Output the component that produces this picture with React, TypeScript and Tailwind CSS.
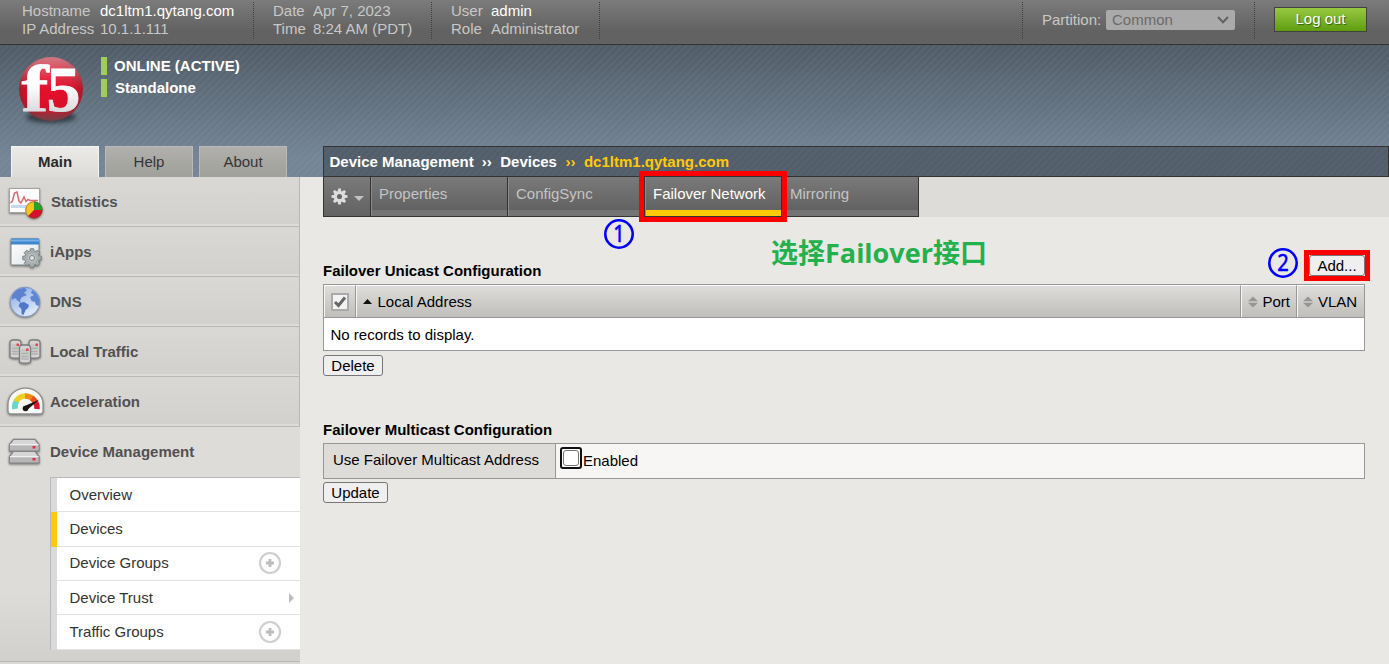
import React from "react";

function Gear({ size, color, hole }: { size: number; color: string; hole: string }) {
  const angles = [0, 45, 90, 135, 180, 225, 270, 315];
  return (
    <svg width={size} height={size} viewBox="-10 -10 20 20">
      <g fill={color}>
        {angles.map((a) => (
          <path key={a} d="M-2.2 -5.5 L-1.5 -9.4 L1.5 -9.4 L2.2 -5.5Z" transform={`rotate(${a})`} />
        ))}
      </g>
      <circle r="6.6" fill={color} />
      <circle r="3" fill={hole} />
    </svg>
  );
}

function F5Logo() {
  return (
    <svg className="-mt-[8px]" width="70" height="88" viewBox="0 -8 70 88">
      <defs>
        <radialGradient id="ball" cx="0.5" cy="0.5" r="0.52">
          <stop offset="0" stopColor="#e80f2c" />
          <stop offset="0.7" stopColor="#d5112a" />
          <stop offset="1" stopColor="#a01c2a" />
        </radialGradient>
        <linearGradient id="shine" x1="0" y1="0" x2="0" y2="1">
          <stop offset="0" stopColor="#fff" stopOpacity="0.42" />
          <stop offset="0.35" stopColor="#fff" stopOpacity="0.1" />
          <stop offset="0.5" stopColor="#fff" stopOpacity="0" />
          <stop offset="0.78" stopColor="#555" stopOpacity="0" />
          <stop offset="1" stopColor="#555" stopOpacity="0.7" />
        </linearGradient>
        <linearGradient id="letter" gradientUnits="userSpaceOnUse" x1="0" y1="12" x2="0" y2="57">
          <stop offset="0.4" stopColor="#fff" />
          <stop offset="1" stopColor="#dadadd" />
        </linearGradient>
        <filter id="soft" x="-20%" y="-50%" width="140%" height="200%">
          <feGaussianBlur stdDeviation="2" />
        </filter>
      </defs>
      <ellipse cx="35" cy="62" rx="25" ry="6" fill="#232a31" opacity="0.75" filter="url(#soft)" />
      <circle cx="35" cy="34" r="32" fill="url(#ball)" />
      <circle cx="35" cy="34" r="32" fill="url(#shine)" />
      <g fontFamily="Liberation Serif, serif" fontWeight="bold" fill="url(#letter)" stroke="url(#letter)" strokeWidth="0.8">
        <text x="5.500" y="56" fontSize="66" textLength="27" lengthAdjust="spacingAndGlyphs">f</text>
        <text x="30.500" y="56" fontSize="64" textLength="34" lengthAdjust="spacingAndGlyphs">5</text>
      </g>
    </svg>
  );
}

const shadow = "drop-shadow-[0_1px_1px_rgba(0,0,0,0.45)]";

function StatisticsIcon() {
  return (
    <svg width="38" height="36" viewBox="0 0 38 36" className={shadow}>
      <rect x="2.5" y="5.5" width="30" height="24" fill="#fbfbfb" stroke="#a3a3a3" />
      <rect x="4" y="22" width="27" height="3" fill="#c5d8ee" />
      <path d="M3.500 20 L5.500 18 L7.500 10 L10 9 L12 18 L14 20 L17 14 L19 18.500 L21 16.500 L23 17.500 L31 17.500" fill="none" stroke="#dd6a70" strokeWidth="1.500" />
      <circle cx="27" cy="27" r="8.500" fill="#d4122c" />
      <path d="M27 27 L27 18.500 A8.500 8.500 0 0 1 35.500 27Z" fill="#27a12a" />
      <path d="M27 27 L21 33 A8.500 8.500 0 0 1 27 18.500Z" fill="#f6c31c" />
      <circle cx="27" cy="27" r="8.200" fill="none" stroke="#6f5a1c" strokeOpacity="0.45" />
    </svg>
  );
}

function IAppsIcon() {
  return (
    <svg width="38" height="36" viewBox="0 0 38 36" className={shadow}>
      <defs>
        <linearGradient id="win" x1="0" y1="0" x2="1" y2="1">
          <stop offset="0" stopColor="#fff" />
          <stop offset="1" stopColor="#dfe4e8" />
        </linearGradient>
      </defs>
      <rect x="4" y="6" width="28" height="26" rx="1" fill="url(#win)" stroke="#7d858a" />
      <rect x="4" y="5.500" width="28" height="6" fill="#3f86cd" />
      <rect x="4" y="6.500" width="28" height="2" fill="#76b0e6" />
      <svg x="15" y="15" width="20" height="20" viewBox="-10 -10 20 20">
        {[0, 45, 90, 135, 180, 225, 270, 315].map((a) => (
          <path key={a} d="M-2.500 -5.500 L-1.700 -9.300 L1.700 -9.300 L2.500 -5.500Z" transform={`rotate(${a})`} fill="#a5adad" stroke="#7b8383" strokeWidth="0.900" />
        ))}
        <circle r="6.800" fill="#a9b1b1" />
        <circle r="4" fill="#bcc3c3" />
        <circle r="2.500" fill="#e2e5e5" stroke="#788080" />
      </svg>
    </svg>
  );
}

function DnsIcon() {
  return (
    <svg width="38" height="36" viewBox="0 0 38 36" className={shadow}>
      <defs>
        <linearGradient id="sea" x1="0" y1="0" x2="0.6" y2="1">
          <stop offset="0" stopColor="#86a8e2" />
          <stop offset="1" stopColor="#dfe9fb" />
        </linearGradient>
      </defs>
      <circle cx="18" cy="19" r="14.800" fill="url(#sea)" stroke="#7f95bf" />
      <path d="M5 13 C8 7 13 5 18 5 L20 7 L17 10 L20 12 L15 14 L13 17 L14 20 L11 18 L8 15 L5 17Z" fill="#5d83cf" />
      <path d="M13 20 L17 19 L22 22 L21 25 L18.500 27 L16.500 32 L14.500 31 L14.500 26 L11.500 23Z" fill="#4e76c9" />
      <path d="M25 7 C29 9 32 13 32.500 18 L32 23 L29 22 L28 19 L24.500 18 L23 14 L27 12 L24 10Z" fill="#5f86d2" />
    </svg>
  );
}

function TrafficIcon() {
  const tower = (x: number, y: number) => (
    <g transform={`translate(${x} ${y})`}>
      <path d="M0.500 4 Q0.500 1 3.500 1 L8 1 Q11.500 1 11.500 4 L11.500 18 Q6 20.500 0.500 18Z" fill="#d4d4d4" stroke="#7c7c7c" strokeWidth="1.300" />
      <path d="M2 5 H10 V16 H2Z" fill="#c6c6c6" />
      <path d="M2.500 9.500 H9 M2.500 12.500 H9 M2.500 15 H9" stroke="#adadad" />
      <rect x="7" y="4.500" width="2.500" height="2.500" fill="#ec3d55" />
      <rect x="7" y="8.500" width="2" height="1.500" fill="#8bd07c" />
    </g>
  );
  return (
    <svg width="38" height="36" viewBox="0 0 38 36" className={shadow}>
      {tower(2.5, 6)}
      {tower(21.5, 6)}
      {tower(12, 11)}
    </svg>
  );
}

function AccelerationIcon() {
  return (
    <svg width="38" height="36" viewBox="0 0 38 36" className={shadow}>
      <path d="M1 28 V21 A17 15.500 0 0 1 36 21 V28 Q36 31 32.500 31 H4.500 Q1 31 1 28Z" fill="#f8f8f6" stroke="#8f8f8f" strokeWidth="1.300" />
      <g fill="none" strokeWidth="5.500">
        <path d="M8 26 A11 11 0 0 1 10 17.500" stroke="#63d6d0" />
        <path d="M9 18.500 A11 11 0 0 1 19 13" stroke="#edcf25" />
        <path d="M18 13 A12 12 0 0 1 26 16" stroke="#f28a16" />
        <path d="M25 15 A11 11 0 0 1 28.500 20" stroke="#e94b20" />
        <path d="M28.500 19 A11 11 0 0 1 30 26" stroke="#db132c" />
      </g>
      <path d="M32.500 16.500 L20 27 A3 3 0 0 1 16.500 23.500Z" fill="#161616" />
      <circle cx="18.500" cy="25.500" r="2.800" fill="#161616" />
    </svg>
  );
}

function DeviceIcon() {
  const box = (y: number) => (
    <g transform={`translate(0 ${y})`}>
      <path d="M2.500 6 L6.500 0.800 H28 L32 6 V12.500 H2.500Z" fill="#d6d6d6" stroke="#858585" strokeWidth="1.300" strokeLinejoin="round" />
      <path d="M3 6 H31.500" stroke="#f0f0f0" />
      <rect x="3.300" y="7" width="28" height="4.600" fill="#b6b6b6" />
      <rect x="25.500" y="7.500" width="3" height="2.500" fill="#e82b47" />
    </g>
  );
  return (
    <svg width="38" height="36" viewBox="0 0 38 36" className={shadow}>
      {box(17.5)}
      {box(5.5)}
    </svg>
  );
}

function NavItem({ icon, label, nudge }: { icon: React.ReactNode; label: string; nudge?: boolean }) {
  return (
    <div className="h-[50px] shrink-0 border-b border-r border-[#b8b8b6] bg-[#dedcd9]">
      <div className="flex h-[47px] items-center bg-gradient-to-b from-[#d9d8d5] to-[#d2d1cd] pl-[7px]">
        {icon}
        <span className={`mt-[3px] font-bold text-[#515151] ${nudge ? "ml-[6px]" : "ml-[5px]"}`}>{label}</span>
      </div>
    </div>
  );
}

function PlusRing() {
  return (
    <svg width="24" height="24" viewBox="0 0 24 24">
      <circle cx="12" cy="12" r="10" fill="none" stroke="#cfcfcf" strokeWidth="2.200" />
      <path d="M12 8 V16 M8 12 H16" stroke="#bdbdbd" strokeWidth="2.800" />
    </svg>
  );
}

function SubItem({ label, height, active, raised, children }: { label: string; height: string; active?: boolean; raised?: boolean; children?: React.ReactNode }) {
  return (
    <div className={`flex ${height}`}>
      <div className={active ? "w-[6px] bg-[#ffc907]" : "w-[6px] bg-[#dadada]"} />
      <div className={`flex flex-1 items-center justify-between border-b border-[#e1e1e1] bg-white pl-[12.500px] text-[#333] ${raised ? "pb-[2px]" : ""}`}>
        <span>{label}</span>
        {children}
      </div>
    </div>
  );
}

function Divider({ className }: { className: string }) {
  return <div className={`mt-[2px] h-[37px] border-l border-dotted border-[#3f3f3f] ${className}`} />;
}

function Tab({ label, active }: { label: string; active?: boolean }) {
  return (
    <div className="flex h-[39px] w-[137px] flex-col border-l border-r border-l-[#8b8b8b] border-r-[#333]">
      <div className={`flex h-[33px] items-center bg-gradient-to-b from-[#7a7a7a] to-[#626262] pl-[7px] ${active ? "text-white" : "text-[#c4c4c4]"}`}>
        {label}
      </div>
      <div className={active ? "h-[6px] bg-[#ffc907]" : "h-[6px] bg-[#747474]"} />
    </div>
  );
}

function SortArrows() {
  return (
    <svg width="10" height="12" viewBox="0 0 10 12">
      <path d="M5 0.500 L10 5.300 H0Z M0 6.700 H10 L5 11.500Z" fill="#969696" />
    </svg>
  );
}

function StepMarker({ step }: { step: string }) {
  return (
    <svg width="44" height="44" viewBox="-6 -6 44 44">
      <circle cx="16" cy="16" r="13.700" fill="none" stroke="#0000fe" strokeWidth="2.600" />
      <text x="10.300" y="24.300" fontFamily="Noto Sans, sans-serif" fontSize="24" fill="#0000fe" stroke="#0000fe" strokeWidth="0.600" textLength="11.500" lengthAdjust="spacingAndGlyphs">{step}</text>
    </svg>
  );
}

const headCell = "flex items-center border-l border-t border-l-[#f6f6f5] border-t-white bg-gradient-to-b from-[#dedddb] to-[#bfbeba]";
const btn = "box-border flex items-center justify-center rounded-[3px] border border-[#767676] bg-[#efefef] leading-none text-black";

export default function App() {
  return (
    <div className="relative flex h-[664px] w-[1389px] flex-col overflow-hidden bg-[#e9e8e4] font-['Liberation_Sans',Arial,sans-serif] text-[15px] leading-[18px] text-black">
      <header className="flex h-[45px] shrink-0 border-b border-[#333] bg-gradient-to-b from-[#7b7b7b] to-[#626262] to-70% text-[#c8c8c8]">
        <div className="flex w-[253px] pl-[22px] pt-[2px]">
          <div className="w-[78px]">Hostname<br />IP Address</div>
          <div><span className="text-white">dc1ltm1.qytang.com</span><br />10.1.1.111</div>
        </div>
        <Divider className="w-[20px]" />
        <div className="flex w-[158px] pt-[2px]">
          <div className="w-[40px]">Date<br />Time</div>
          <div className="whitespace-nowrap">Apr 7, 2023<br />8:24 AM (PDT)</div>
        </div>
        <Divider className="w-[20px]" />
        <div className="flex w-[148px] pt-[2px]">
          <div className="w-[40px]">User<br />Role</div>
          <div><span className="text-white">admin</span><br />Administrator</div>
        </div>
        <Divider className="w-[423px]" />
        <Divider className="w-[20px]" />
        <div className="flex w-[212px] pt-[10px]">
          <span className="w-[64px] pt-[1px]">Partition:</span>
          <div className="flex h-[20px] w-[129px] items-center justify-between rounded-[2px] bg-[#aaa] pl-[6px] pr-[6px] text-[#6b6b6b]">
            <span>Common</span>
            <svg width="12" height="8" viewBox="0 0 12 8"><path d="M1 1 L6 6.200 L11 1" fill="none" stroke="#626262" strokeWidth="2" /></svg>
          </div>
        </div>
        <Divider className="w-[20px]" />
        <div className="mt-[7px] flex h-[25px] w-[93px] items-center justify-center border border-[#414141] bg-gradient-to-b from-[#97c93f] to-[#5f9d0c] pb-[1px] text-white [text-shadow:1px_1px_1px_#35600a]">Log out</div>
      </header>

      <div className="flex h-[132px] shrink-0 bg-[repeating-linear-gradient(135deg,rgba(255,255,255,0.035)_0px,rgba(255,255,255,0.035)_2px,transparent_2px,transparent_5px),linear-gradient(to_bottom,#505c67,#748596_85%)]">
        <div className="flex w-[323px] flex-col justify-between">
          <div className="flex pl-[16px] pt-[10px]">
            <F5Logo />
            <div className="ml-[15px] mt-[2px] flex flex-col gap-[4px] font-bold text-white">
              <div className="border-l-[6px] border-[#9fcd55] pl-[7px]">ONLINE (ACTIVE)</div>
              <div className="border-l-[6px] border-[#9fcd55] pl-[8px]">Standalone</div>
            </div>
          </div>
          <div className="flex gap-[6px] pl-[11px] text-[#353535]">
            <div className="flex h-[31px] w-[88px] items-center justify-center border border-b-0 border-[#f5f5f4] bg-gradient-to-b from-[#ebeae8] to-[#dcdbd7] font-bold text-[#2a2a2a]">Main</div>
            <div className="flex h-[31px] w-[88px] items-center justify-center border border-b-0 border-[#bab9b7] bg-gradient-to-b from-[#b0afac] to-[#a0a09a]">Help</div>
            <div className="flex h-[31px] w-[88px] items-center justify-center border border-b-0 border-[#bab9b7] bg-gradient-to-b from-[#b0afac] to-[#a0a09a]">About</div>
          </div>
        </div>
        <div className="mt-[101px] flex h-[31px] flex-1 items-center border border-[#333] bg-[repeating-linear-gradient(135deg,rgba(255,255,255,0.025)_0px,rgba(255,255,255,0.025)_2px,transparent_2px,transparent_5px)] bg-[#525e6a] pl-[5.500px] font-bold text-white">
          <span>Device Management</span>
          <span className="ml-[8px]">››</span>
          <span className="ml-[8.500px]">Devices</span>
          <span className="ml-[8.500px] text-[#ffc907]">››</span>
          <span className="ml-[8.500px] text-[#ffc907]">dc1ltm1.qytang.com</span>
        </div>
      </div>

      <div className="flex h-[487px] shrink-0">
        <nav className="flex w-[300px] shrink-0 flex-col">
          <NavItem icon={<StatisticsIcon />} label="Statistics" nudge />
          <NavItem icon={<IAppsIcon />} label="iApps" />
          <NavItem icon={<DnsIcon />} label="DNS" />
          <NavItem icon={<TrafficIcon />} label="Local Traffic" />
          <NavItem icon={<AccelerationIcon />} label="Acceleration" />
          <div className="h-[235px] shrink-0 border-b border-[#b8b8b6] bg-gradient-to-b from-[#dedcd9] from-70% to-[#d1d0cc]">
            <div className="flex h-[50px] items-center pl-[7px]">
              <div className="-mt-[3px]"><DeviceIcon /></div>
              <span className="ml-[5px] font-bold text-[#515151]">Device Management</span>
            </div>
            <div className="ml-[50px] border-l border-t border-[#b8b8b8]">
              <SubItem label="Overview" height="h-[34px]" />
              <SubItem label="Devices" height="h-[35px]" active />
              <SubItem label="Device Groups" height="h-[34px]" raised><div className="mr-[18px]"><PlusRing /></div></SubItem>
              <SubItem label="Device Trust" height="h-[34px]">
                <svg className="mr-[6px]" width="5" height="10" viewBox="0 0 5 10"><path d="M0 0 L5 5 L0 10Z" fill="#bebebe" /></svg>
              </SubItem>
              <SubItem label="Traffic Groups" height="h-[35px]"><div className="mr-[18px]"><PlusRing /></div></SubItem>
            </div>
          </div>
          <div className="flex-1 bg-[#d9d8d5]" />
        </nav>

        <main className="flex-1 pl-[23px]">
          <div className="flex h-[40px] bg-[#dedcd9]">
            <div className="flex border-b border-l border-[#333]">
              <div className="flex h-[39px] w-[47px] items-center border-r border-[#333] bg-gradient-to-b from-[#7a7a7a] to-[#626262] pl-[7px]">
                <Gear size={17} color="#dedede" hole="#686868" />
                <svg className="ml-[6px] mt-[4px]" width="10" height="5" viewBox="0 0 10 5"><path d="M0 0 H10 L5 5Z" fill="#c2c2c2" /></svg>
              </div>
              <Tab label="Properties" />
              <Tab label="ConfigSync" />
              <Tab label="Failover Network" active />
              <Tab label="Mirroring" />
            </div>
          </div>

          <div className="w-[1042px]">
            <div className="flex h-[67px] justify-between">
              <h2 className="mt-[45px] font-bold">Failover Unicast Configuration</h2>
              <button className={`mt-[38px] h-[21px] w-[56px] ${btn}`}>Add...</button>
            </div>
            <div className="h-[67px] border border-[#979797] bg-white">
              <div className="flex h-[33px] border-b border-[#979797]">
                <div className={`w-[32px] justify-center border-r border-r-[#979797] ${headCell}`}>
                  <div className="flex h-[18px] w-[18px] items-center justify-center border-2 border-[#aaa] bg-[#f3f3f3]">
                    <svg width="14" height="14" viewBox="0 0 14 14"><path d="M2 7 L5.500 10.500 L12 2.500" fill="none" stroke="#666" strokeWidth="3" /></svg>
                  </div>
                </div>
                <div className={`flex-1 border-r border-r-[#979797] pl-[6px] ${headCell}`}>
                  <svg width="9" height="5" viewBox="0 0 9 5"><path d="M4.500 0 L9 5 H0Z" fill="#111" /></svg>
                  <span className="ml-[5.500px]">Local Address</span>
                </div>
                <div className={`w-[56px] gap-[5px] border-r border-r-[#979797] pl-[5.500px] ${headCell}`}><SortArrows />Port</div>
                <div className={`w-[67px] gap-[5px] pl-[5px] ${headCell}`}><SortArrows />VLAN</div>
              </div>
              <div className="flex h-[32px] items-center pl-[6.500px] pt-[2px]">No records to display.</div>
            </div>
            <button className={`mt-[4px] h-[21px] w-[60px] ${btn}`}>Delete</button>

            <h2 className="mt-[45px] font-bold">Failover Multicast Configuration</h2>
            <div className="mt-[4px] flex h-[36px] border border-[#979797] bg-[#f7f6f5]">
              <div className="flex w-[232px] items-center border-r border-[#979797] bg-[#dedcd9] pb-[2px] pl-[9px]">Use Failover Multicast Address</div>
              <div className="flex pl-[4px] pt-[3px]">
                <div className="flex h-[22px] w-[22px] items-center justify-center rounded-[3px] border-2 border-[#101010] bg-white">
                  <div className="h-[16px] w-[16px] rounded-[3px] border border-[#767676] bg-white" />
                </div>
                <span className="ml-[1px] mt-[5px]">Enabled</span>
              </div>
            </div>
            <button className={`mt-[3px] h-[21px] w-[65px] ${btn}`}>Update</button>
          </div>
        </main>
      </div>

      <div className="absolute left-[639px] top-[171px] h-[51px] w-[148px] border-[5px] border-[#fe0000]" />
      <div className="absolute left-[1304px] top-[250px] h-[31px] w-[66px] border-[5px] border-[#fe0000]" />
      <div className="absolute left-[597px] top-[212px]"><StepMarker step="1" /></div>
      <div className="absolute left-[1261px] top-[241px]"><StepMarker step="2" /></div>
      <div className="absolute left-[771px] top-[233px] whitespace-nowrap font-['Open_Sans','Noto_Sans_CJK_SC',sans-serif] text-[27px] font-bold leading-[40px] text-[#22b14c]">选择Failover接口</div>
    </div>
  );
}
